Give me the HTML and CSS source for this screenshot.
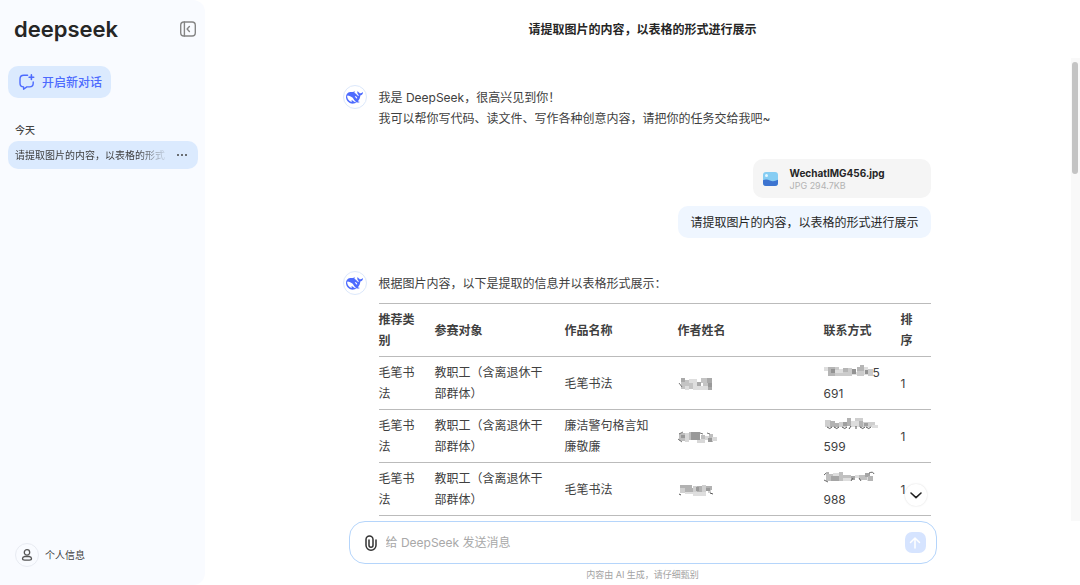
FILE: index.html
```html
<!DOCTYPE html>
<html lang="zh-CN">
<head>
<meta charset="utf-8">
<meta name="viewport" content="width=device-width, initial-scale=1">
<title>DeepSeek</title>
<link rel="stylesheet" href="styles.css">
</head>
<body>
<svg class="defs" aria-hidden="true">
  <symbol id="whale" viewBox="0 0 24 24"><path fill="currentColor" d="M23.748 4.482c-.254-.124-.364.113-.512.234-.051.039-.094.09-.137.136-.372.397-.806.657-1.373.626-.829-.046-1.537.214-2.163.848-.133-.782-.575-1.248-1.247-1.548-.352-.156-.708-.311-.955-.65-.172-.241-.219-.51-.305-.774-.055-.16-.11-.323-.293-.35-.2-.031-.278.136-.356.276-.313.572-.434 1.202-.422 1.84.027 1.436.633 2.58 1.838 3.393.137.093.172.187.129.323-.082.28-.18.552-.266.833-.055.179-.137.217-.329.14a5.526 5.526 0 01-1.736-1.18c-.857-.828-1.631-1.742-2.597-2.458a11.365 11.365 0 00-.689-.471c-.985-.957.13-1.743.388-1.836.27-.098.093-.432-.779-.428-.872.004-1.67.295-2.687.684a3.055 3.055 0 01-.465.137 9.597 9.597 0 00-2.883-.102c-1.885.21-3.39 1.102-4.497 2.623C.082 8.606-.231 10.684.152 12.85c.403 2.284 1.569 4.175 3.36 5.653 1.858 1.533 3.997 2.284 6.438 2.14 1.482-.085 3.133-.284 4.994-1.86.47.234.962.327 1.78.397.63.059 1.236-.03 1.705-.128.735-.156.684-.837.419-.961-2.155-1.004-1.682-.595-2.113-.926 1.096-1.296 2.746-2.642 3.392-7.003.05-.347.007-.565 0-.845-.004-.17.035-.237.23-.256a4.173 4.173 0 001.545-.475c1.396-.763 1.96-2.015 2.093-3.517.02-.23-.004-.467-.247-.588zM11.581 18c-2.089-1.642-3.102-2.183-3.52-2.16-.392.024-.321.471-.235.763.09.288.207.486.371.739.114.167.192.416-.113.603-.673.416-1.842-.14-1.897-.167-1.361-.802-2.5-1.86-3.301-3.307-.774-1.393-1.224-2.887-1.298-4.482-.02-.386.093-.522.477-.592a4.696 4.696 0 011.529-.039c2.132.312 3.946 1.265 5.468 2.774.868.86 1.525 1.887 2.202 2.891.72 1.066 1.494 2.082 2.48 2.914.348.292.625.514.891.677-.802.09-2.14.11-3.054-.614zm1-6.44a.306.306 0 01.415-.287.302.302 0 01.2.288.306.306 0 01-.31.307.303.303 0 01-.304-.308zm3.11 1.596c-.2.081-.399.151-.59.16a1.245 1.245 0 01-.798-.254c-.274-.23-.47-.358-.552-.758a1.73 1.73 0 01.016-.588c.07-.327-.008-.537-.239-.727-.187-.156-.426-.199-.688-.199a.559.559 0 01-.254-.078c-.11-.054-.2-.19-.114-.358.028-.054.16-.186.192-.21.356-.202.767-.136 1.146.016.352.144.618.408 1.001.782.391.451.462.576.685.914.176.265.336.537.445.848.067.195-.019.354-.25.452z"/></symbol>
</svg>
<div class="app">
  <aside class="sidebar">
    <div class="brand">
      <span class="logo">deepseek</span>
      <button class="icon-btn" type="button" aria-label="收起边栏">
        <svg width="18" height="18" viewBox="0 0 18 18" fill="none" stroke="#858585" stroke-width="1.4" stroke-linecap="round" stroke-linejoin="round"><rect x="1.7" y="2" width="14.6" height="14" rx="3.2"/><path d="M5.4 2v14M10.4 6.6 8.1 9l2.3 2.4"/></svg>
      </button>
    </div>
    <button class="new-chat" type="button">
      <svg width="18" height="18" viewBox="0 0 18 18" fill="none" stroke="currentColor" stroke-width="1.4" stroke-linecap="round" stroke-linejoin="round"><path d="M9.600 2.300H5.800Q2 2.300 2 6v4.200q0 3.700 3.600 3.700v2.400l3.200-2.400h2.800q3.600 0 3.600-3.700V9"/><path d="M13.400 1.900v4.600M11.100 4.200h4.600" stroke-width="1.600"/></svg>
      <span>开启新对话</span>
    </button>
    <h2 class="group">今天</h2>
    <div class="chat-item">
      <a class="chat-link" href="#chat">请提取图片的内容，以表格的形式</a>
      <button class="icon-btn" type="button" aria-label="更多">
        <svg width="12" height="12" viewBox="0 0 12 12" fill="#444"><circle cx="2" cy="6" r="1"/><circle cx="6" cy="6" r="1"/><circle cx="10" cy="6" r="1"/></svg>
      </button>
    </div>
    <button class="profile" type="button">
      <span class="round">
        <svg width="14" height="14" viewBox="0 0 14 14" fill="none" stroke="#555" stroke-width="1.3"><circle cx="7" cy="4.4" r="2.7"/><path d="M4.700 8.500h4.600q2.200.4 2.200 2 0 1.600-2.200 1.600H4.700q-2.200 0-2.200-1.600 0-1.600 2.200-2Z"/></svg>
      </span>
      <span>个人信息</span>
    </button>
  </aside>

  <main class="main">
    <header class="header"><h1 class="title">请提取图片的内容，以表格的形式进行展示</h1></header>

    <section class="scroll" id="chat">
      <div class="column messages">
        <article class="reply">
          <span class="round avatar"><svg width="17" height="17"><use href="#whale"/></svg></span>
          <div class="body">
            <p>我是 DeepSeek，很高兴见到你！</p>
            <p>我可以帮你写代码、读文件、写作各种创意内容，请把你的任务交给我吧~</p>
          </div>
        </article>

        <article class="request">
          <div class="file">
            <svg width="16" height="16" viewBox="0 0 16 16"><rect x="1" y="1" width="15" height="14" rx="3" fill="#86cdf3"/><path d="M1 9.300q3.500-1.800 7 .3 3.500 1.600 8-.8V12q0 3-3 3H4q-3 0-3-3Z" fill="#3d74d0"/><circle cx="4.500" cy="4.500" r="1.500" fill="#e3f6ff"/></svg>
            <div class="file-text">
              <div class="file-name">WechatIMG456.jpg</div>
              <div class="file-size">JPG 294.7KB</div>
            </div>
          </div>
          <p class="bubble">请提取图片的内容，以表格的形式进行展示</p>
        </article>

        <article class="reply">
          <span class="round avatar"><svg width="17" height="17"><use href="#whale"/></svg></span>
          <div class="body">
            <p>根据图片内容，以下是提取的信息并以表格形式展示：</p>
            <table class="table">
              <colgroup><col class="c-type"><col class="c-target"><col class="c-work"><col class="c-author"><col class="c-phone"><col class="c-rank"></colgroup>
              <thead>
                <tr><th>推荐类别</th><th>参赛对象</th><th>作品名称</th><th>作者姓名</th><th>联系方式</th><th>排序</th></tr>
              </thead>
              <tbody>
                <tr>
                  <td>毛笔书法</td><td>教职工（含离退休干部群体）</td><td>毛笔书法</td>
                  <td><svg class="mosaic" width="36" height="14" viewBox="0 0 36 14"><path fill="#a9a9a9" d="M3 1h4v4H3zM19 5h4v4h-4zM29 1h5v5h-5zM30 10h4v3h-4z"/><path fill="#c4c4c4" d="M7 3h4v6H7zM3 5h4v7H3zM23 1h6v5h-6zM25 6h5v3h-5zM11 6h4v6h-4z"/><path fill="#dedede" d="M11 2h8v4h-8zM15 6h4v7h-4zM19 9h11v4H19zM7 9h4v4H7z"/><path fill="#999" d="M30 6h4v4h-4z"/><path d="m1 6 3 4" stroke="#777"/></svg></td>
                  <td><svg class="mosaic phone" width="49" height="12" viewBox="0 0 49 12"><path fill="#dedede" d="M0 2h4v4H0zM11 4h8v6h-8zM28 7h5v3h-5zM40 2h4v8h-4z"/><path fill="#b5b5b5" d="M4 2h7v9H4zM19 3h5v4h-5zM33 2h7v4h-7zM36 0h4v2h-4z"/><path fill="#cbcbcb" d="M11 2h4v3h-4zM11 8h8v3h-8zM19 7h9v4h-9zM24 3h4v4h-4zM33 6h7v5h-7zM44 4h5v7h-5z"/><path fill="#929292" d="M7 4h4v4H7zM28 4h4v5h-4zM41 5h3v4h-3z"/></svg>5<br>691</td>
                  <td>1</td>
                </tr>
                <tr>
                  <td>毛笔书法</td><td>教职工（含离退休干部群体）</td><td>廉洁警句格言知廉敬廉</td>
                  <td><svg class="mosaic" width="40" height="14" viewBox="0 0 40 14"><path fill="#bebebe" d="M1 3h6v8H1zM11 2h4v8h-4zM23 5h4v6h-4zM31 4h4v8h-4z"/><path fill="#d8d8d8" d="M7 3h4v9H7zM19 9h8v4h-8zM27 6h4v4h-4zM34 7h5v4h-5z"/><path fill="#999" d="M13 2h9v8h-9zM3 5h4v3H3zM30 8h4v4h-4z"/><path fill="none" stroke="#777" d="m1 4 4-2M22 3l3 1M29 3l3 1M0 9l4 3"/></svg></td>
                  <td><svg class="mosaic phone" width="54" height="12" viewBox="0 0 54 12"><path fill="#cfcfcf" d="M1 2h6v7H1zM15 4h8v5h-8zM31 0h8v4h-8zM39 4h12v5H39z"/><path fill="#b2b2b2" d="M6 3h5v6H6zM11 5h4v4h-4zM23 0h4v8h-4zM35 3h4v6h-4z"/><path fill="#dedede" d="M27 3h8v6h-8zM48 7h6v3h-6z"/><path fill="#a0a0a0" d="M19 4h4v4h-4zM40 5h4v3h-4z"/><path fill="none" stroke="#555" d="M3 9q3 3 5 0M10 9q3 3 5 0M18 9q3 3 5 0M27 8l-2 3M32 8v3M36 9q3 3 5 0M42 9q3 3 5 0"/></svg><br>599</td>
                  <td>1</td>
                </tr>
                <tr>
                  <td>毛笔书法</td><td>教职工（含离退休干部群体）</td><td>毛笔书法</td>
                  <td><svg class="mosaic" width="36" height="14" viewBox="0 0 36 14"><path fill="#b2b2b2" d="M2 2h12v3H2zM7 5h8v4H7zM19 3h5v6h-5zM28 3h6v4h-6z"/><path fill="#cfcfcf" d="M2 5h5v5H2zM15 3h4v6h-4zM24 2h4v9h-4zM30 7h3v3h-3z"/><path fill="#dedede" d="M15 9h13v4H15zM7 9h8v2H7z"/><path fill="#999" d="M18 4h3v4h-3zM28 5h4v3h-4z"/><path stroke="#555" d="m1 11 2 1M32 10l3 1"/></svg></td>
                  <td><svg class="mosaic phone" width="51" height="12" viewBox="0 0 51 12"><path fill="#c0c0c0" d="M2 3h7v7H2zM15 1h4v9h-4zM19 4h8v4h-8zM35 4h8v5h-8z"/><path fill="#a5a5a5" d="M7 5h8v5H7zM27 5h4v4h-4zM41 2h5v4h-5z"/><path fill="#dedede" d="M9 2h6v3H9zM19 7h8v3h-8zM31 4h4v3h-4zM43 6h4v4h-4z"/><path fill="#b5b5b5" d="M44 5h5v5h-5z"/><path fill="none" stroke="#666" d="M0 4q2-3 5-2M0 9l4 2M27 10l2-3M35 7l2 3M45 2q4-2 5 1"/></svg><br>988</td>
                  <td>1</td>
                </tr>
              </tbody>
            </table>
          </div>
        </article>
        <button class="to-bottom" type="button" aria-label="滚动到底部">
          <svg width="14" height="14" viewBox="0 0 14 14" fill="none" stroke="#222" stroke-width="1.6" stroke-linecap="round" stroke-linejoin="round"><path d="m2 5 5 4.600L12 5"/></svg>
        </button>
      </div>
      <div class="track"><div class="thumb"></div></div>
    </section>

    <footer class="column footer">
      <form class="composer">
        <button class="icon-btn" type="button" aria-label="上传附件">
          <svg width="12" height="16" viewBox="0 0 12 16" fill="none" stroke="#333" stroke-width="1.500" stroke-linecap="round"><path d="M11 5v5.200a5 5 0 0 1-10 0V4.400a3.500 3.500 0 0 1 7 0v5.800a2 2 0 0 1-4 0V5"/></svg>
        </button>
        <input class="prompt" type="text" aria-label="消息" placeholder="给 DeepSeek 发送消息">
        <button class="send" type="submit" aria-label="发送">
          <svg width="14" height="14" viewBox="0 0 14 14" fill="none" stroke="#fff" stroke-width="1.500" stroke-linecap="round" stroke-linejoin="round"><path d="M7 12V2M2.500 6.500 7 2l4.500 4.500"/></svg>
        </button>
      </form>
      <p class="note">内容由 AI 生成，请仔细甄别</p>
    </footer>
  </main>
</div>
</body>
</html>
```
FILE: styles.css
```css
* { box-sizing: border-box; }
body, h1, h2, p { margin: 0; }
body {
  font-family: Inter, "Noto Sans CJK SC", sans-serif;
  font-size: 12px;
  line-height: 21px;
  color: #404040;
  background: #fff;
}
button, input { font: inherit; color: inherit; border: 0; padding: 0; background: none; }
button { cursor: pointer; }
svg { display: block; flex: none; }
.defs { position: absolute; width: 0; height: 0; }

.app { display: flex; height: 100vh; }

.sidebar {
  width: 205px;
  flex: none;
  display: flex;
  flex-direction: column;
  padding: 16px 7px 18px 8px;
  background: #f9fbff;
  border-radius: 0 12px 12px 0;
}
.brand { display: flex; justify-content: space-between; align-items: center; height: 26px; padding: 0 0 0 6px; }
.brand .icon-btn { margin-right: 1px; }
.logo { font-size: 22px; font-weight: 600; line-height: 26px; color: #262626; }
.new-chat {
  align-self: flex-start;
  display: flex;
  align-items: center;
  gap: 6px;
  height: 32px;
  margin-top: 24px;
  padding: 0 9px 0 10px;
  border-radius: 10px;
  background: #dbeafe;
  color: #4d6bfe;
  font-weight: 500;
}
.group { margin: 22px 0 1px; padding-left: 7px; font-size: 10px; font-weight: 500; line-height: 20px; color: #444; }
.chat-item {
  display: flex;
  align-items: center;
  gap: 7px;
  height: 28px;
  padding: 0 10px 0 7px;
  border-radius: 10px;
  background: #dbeafe;
}
.chat-link {
  flex: 1;
  min-width: 0;
  white-space: nowrap;
  font-size: 10px;
  color: #404040;
  text-decoration: none;
  mask-image: linear-gradient(to right, #000 80%, transparent);
}
.profile { display: flex; align-items: center; gap: 6px; margin-top: auto; padding-left: 7px; font-size: 10px; }
.round {
  width: 24px;
  height: 24px;
  flex: none;
  display: grid;
  place-items: center;
  border: 1px solid #e8ebf2;
  border-radius: 50%;
}

.main { flex: 1; min-width: 0; display: flex; flex-direction: column; }
.header { height: 58px; flex: none; display: grid; place-items: center; }
.title { font-size: 12px; font-weight: 600; line-height: 21px; color: #262626; }
.column { width: 100%; max-width: 600px; margin: 0 auto; }

.scroll { flex: 1; min-height: 0; position: relative; overflow: hidden; }
.messages { position: relative; height: 100%; padding: 29px 12px 0 0; }
.reply { display: flex; gap: 12px; }
.reply .body { flex: 1; min-width: 0; }
.avatar { color: #4d6bfe; border-color: #dce8fb; margin-top: -2px; }
.request { display: flex; flex-direction: column; align-items: flex-end; gap: 8px; margin: 30px 0 35px; }
.file { display: flex; align-items: center; gap: 12px; width: 178px; height: 39px; padding: 0 9px; border-radius: 10px; background: #f5f5f5; }
.file-name { font-size: 10px; font-weight: 700; line-height: 14px; color: #262626; }
.file-size { font-size: 9px; line-height: 12px; color: #b3b3b3; }
.bubble { padding: 6px 12px 5px; border-radius: 10px; background: #eff6ff; color: #262626; }

.table { width: 100%; margin-top: 9px; table-layout: fixed; border-collapse: collapse; border-top: 1px solid #bbb; }
.table th, .table td { padding: 5px 18px 5px 0; text-align: left; vertical-align: middle; border-bottom: 1px solid #bbb; }
.table th { font-weight: 600; }
.table th:last-child, .table td:last-child { padding-right: 12px; }
.c-type { width: 56px; }
.c-target { width: 130px; }
.c-work { width: 113px; }
.c-author { width: 146px; }
.c-phone { width: 77px; }
.mosaic { display: inline-block; vertical-align: middle; }
.mosaic.phone { vertical-align: baseline; }

.to-bottom {
  position: absolute;
  right: 16px;
  bottom: 15px;
  width: 22px;
  height: 22px;
  display: grid;
  place-items: center;
  border-radius: 50%;
  background: #fff;
  box-shadow: 0 0 2px rgba(0, 0, 0, 0.15);
}
.track { position: absolute; top: 0; right: 0; bottom: 0; width: 9px; padding: 4px 1px; background: #f9f9f9; }
.thumb { height: 112px; width: 6px; border-radius: 3px; background: #c4c4c4; }

.footer { flex: none; padding: 0 6px; }
.composer { display: flex; align-items: center; gap: 9px; height: 43px; padding: 0 10px 0 15px; border: 1px solid #b5d5fb; border-radius: 16px; background: #fff; }
.prompt { flex: 1; min-width: 0; outline: 0; }
.prompt::placeholder { color: #a8a8a8; opacity: 1; }
.send { width: 21px; height: 21px; display: grid; place-items: center; border-radius: 7px; background: #d6e4ff; }
.note { font-size: 9px; text-align: center; color: #a3a3a3; }
```
